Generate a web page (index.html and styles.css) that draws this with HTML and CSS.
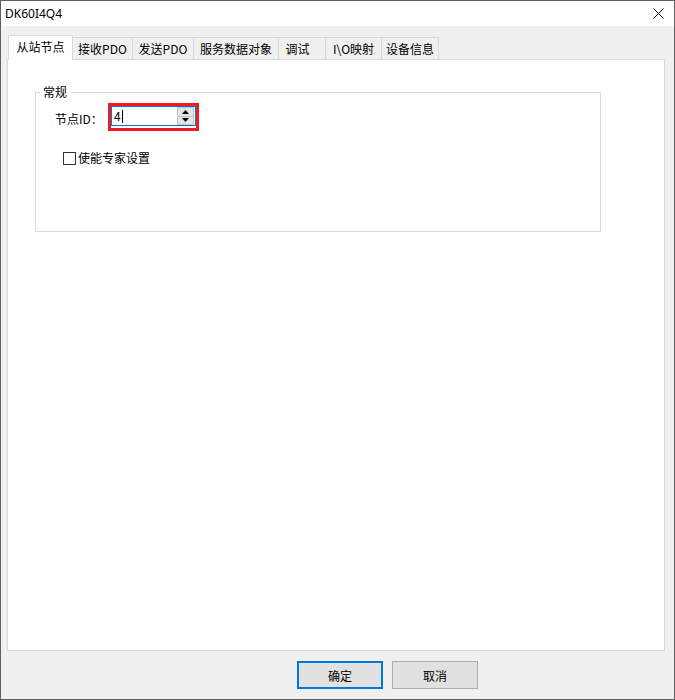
FILE: index.html
```html
<!DOCTYPE html>
<html lang="zh-CN">
<head>
<meta charset="utf-8">
<title>DK60I4Q4</title>
<link rel="stylesheet" href="styles.css">
</head>
<body>
<div class="window">
  <div class="titlebar">
    <span class="title">DK60I4Q4</span>
    <span class="close">
      <svg width="11" height="11" viewBox="0 0 11 11"><path d="M0.5 0.5L10.5 10.5M10.5 0.5L0.5 10.5" stroke="#000" stroke-width="1" fill="none"/></svg>
    </span>
  </div>
  <div class="client">
    <div class="tabs">
      <div class="tab active t1">从站节点</div>
      <div class="tab t2">接收PDO</div>
      <div class="tab t3">发送PDO</div>
      <div class="tab t4">服务数据对象</div>
      <div class="tab t5">调试</div>
      <div class="tab t6">I\O映射</div>
      <div class="tab t7">设备信息</div>
    </div>
    <div class="panel">
      <div class="group">
        <div class="legend">常规</div>
        <div class="row">
          <span class="label">节点ID：</span>
          <span class="mark">
            <span class="spin">
              <span class="edit"><span class="val">4</span><span class="caret"></span></span>
              <span class="arrows">
                <span class="arrow up"><svg width="7" height="4" viewBox="0 0 7 4"><path d="M3.5 0L7 4H0Z" fill="#000"/></svg></span>
                <span class="arrow down"><svg width="7" height="4" viewBox="0 0 7 4"><path d="M0 0H7L3.5 4Z" fill="#000"/></svg></span>
              </span>
            </span>
          </span>
        </div>
        <div class="check"><span class="box"></span><span class="check-text">使能专家设置</span></div>
      </div>
    </div>
    <div class="buttons">
      <button class="btn default">确定</button>
      <button class="btn">取消</button>
    </div>
  </div>
</div>
</body>
</html>
```
FILE: styles.css
```css
html, body {
  margin: 0;
  padding: 0;
}
body {
  font-family: "Noto Sans CJK SC", "Noto Sans", sans-serif;
  font-size: 12px;
  color: #000;
  background: #fff;
}
.window {
  width: 675px;
  height: 700px;
  box-sizing: border-box;
  border: 1px solid #606060;
  background: #f0f0f0;
  display: flex;
  flex-direction: column;
}
.titlebar {
  height: 25px;
  flex: none;
  background: #fff;
  display: flex;
  align-items: center;
  padding-left: 4px;
}
.title {
  font-family: "Noto Sans", sans-serif;
  font-size: 12px;
  line-height: 16px;
}
.close {
  margin-left: auto;
  margin-right: 10px;
  display: flex;
}
.client {
  flex: 1;
  display: flex;
  flex-direction: column;
  padding: 9px 0 0 6px;
}
.tabs {
  display: flex;
  align-items: flex-end;
  height: 24px;
  position: relative;
  z-index: 1;
}
.tab {
  height: 22px;
  box-sizing: border-box;
  border: 1px solid #d9d9d9;
  border-bottom: 0;
  background: #f0f0f0;
  display: flex;
  align-items: center;
  justify-content: center;
  margin-left: -1px;
  line-height: 16px;
  white-space: nowrap;
}
.tab.active {
  height: 25px;
  margin-bottom: -1px;
  background: #fff;
  padding-bottom: 2px;
}
.t1 { width: 65px; margin-left: 1px; }
.t2 { width: 61px; }
.t3 { width: 62px; }
.t4 { width: 86px; }
.t5 { width: 48px; padding-right: 9px; }
.t6 { width: 57px; }
.t7 { width: 58px; }
.panel {
  width: 658px;
  height: 592px;
  box-sizing: border-box;
  border: 1px solid #d9d9d9;
  background: #fff;
  flex: none;
}
.group {
  margin: 32px 0 0 27px;
  width: 566px;
  height: 140px;
  box-sizing: border-box;
  border: 1px solid #dcdcdc;
  padding-left: 19px;
}
.legend {
  display: table;
  margin: -9px 0 0 -15px;
  padding: 0 3px;
  background: #fff;
  line-height: 16px;
}
.row {
  display: flex;
  align-items: flex-start;
  margin-top: 3px;
}
.label {
  width: 53px;
  line-height: 16px;
  margin-top: 8px;
  white-space: nowrap;
}
.mark {
  width: 91px;
  height: 28px;
  box-sizing: border-box;
  border: 3px solid #ed1c24;
  display: flex;
  align-items: flex-start;
  background: #fff;
}
.spin {
  display: flex;
  width: 85px;
  height: 20px;
}
.edit {
  width: 66px;
  box-sizing: border-box;
  border: 1px solid #0078d7;
  border-right: 0;
  background: #fff;
  display: flex;
  align-items: center;
  padding-left: 2px;
}
.val {
  line-height: 14px;
}
.caret {
  width: 1px;
  height: 13px;
  background: #000;
  margin-left: 1px;
}
.arrows {
  width: 19px;
  box-sizing: border-box;
  border: 1px solid #0078d7;
  border-left: 0;
  display: flex;
  flex-direction: column;
  padding: 0 1px 0 0;
  background: #fff;
}
.arrow {
  flex: 1;
  box-sizing: border-box;
  border: 1px solid #c4c4c4;
  background: #e5e5e5;
  display: flex;
  align-items: center;
  justify-content: center;
}
.arrow.down {
  border-top: 0;
}
.check {
  display: flex;
  align-items: center;
  margin: 19px 0 0 8px;
  line-height: 16px;
}
.box {
  width: 13px;
  height: 13px;
  box-sizing: border-box;
  border: 1px solid #333;
  background: #fff;
  margin-right: 2px;
}
.buttons {
  display: flex;
  gap: 9px;
  padding: 10px 0 0 290px;
}
.btn {
  width: 86px;
  height: 28px;
  box-sizing: border-box;
  border: 1px solid #adadad;
  background: #e1e1e1;
  font-family: inherit;
  font-size: 12px;
  color: #000;
  padding: 0;
  margin: 0;
}
.btn.default {
  border: 2px solid #0078d7;
}
```
